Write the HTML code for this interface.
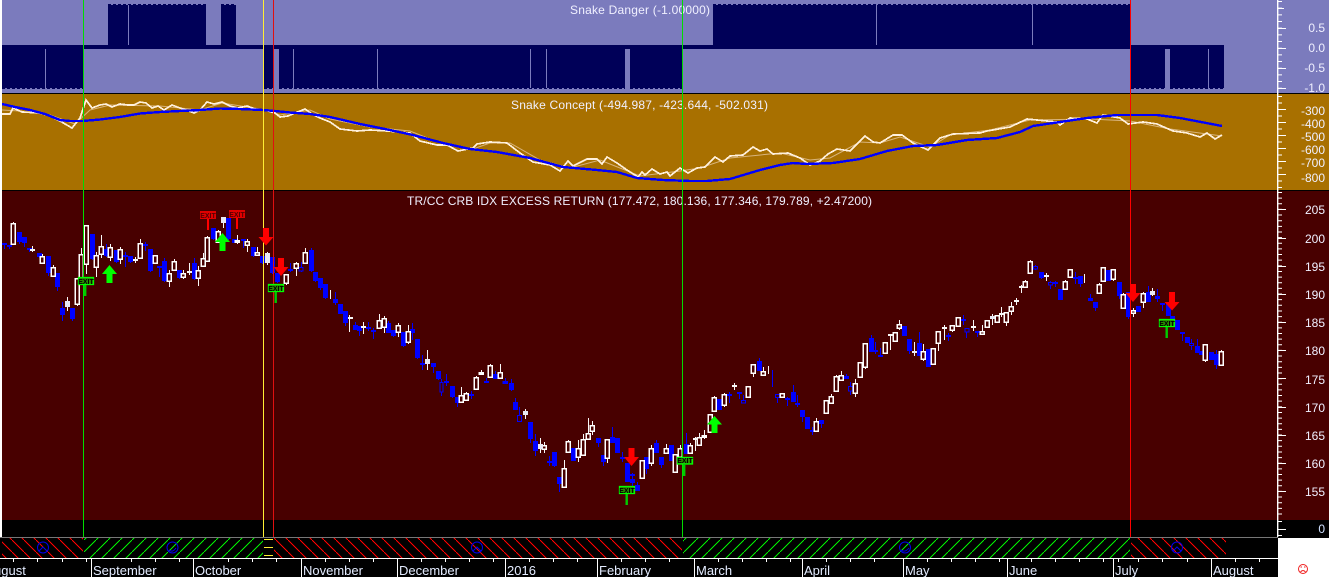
<!DOCTYPE html>
<html><head><meta charset="utf-8"><style>
html,body{margin:0;padding:0;background:#fff;width:1329px;height:577px;overflow:hidden}
svg{display:block;position:absolute;left:0;top:0}
text{font-family:"Liberation Sans",sans-serif;font-size:12px;fill:#f0f0ff}
.r{text-anchor:end}
.x{font-size:13px;fill:#e4ecff}
.e{font-size:7px;font-weight:bold;text-anchor:middle}
.bw,.ww,.bb,.bc,.wc,.wf,.wh,.bh{shape-rendering:crispEdges}
.bw{stroke:#00f;stroke-width:1;fill:none}
.ww{stroke:#f8f8f8;stroke-width:1;fill:none}
.bb{stroke:#00f;stroke-width:5;fill:none}
.bc{stroke:#00f;stroke-width:2;fill:none}
.wc{stroke:#f8f8f8;stroke-width:2;fill:none}
.wf{stroke:#e8e8f4;stroke-width:5;fill:none}
.wh{stroke:#fff;stroke-width:1.5;fill:#480000}
.bh{stroke:#00f;stroke-width:1.2;fill:#480000}
</style></head><body>
<svg width="1329" height="577" viewBox="0 0 1329 577">
<defs>
<pattern id="hr" width="12" height="12" patternUnits="userSpaceOnUse"><path shape-rendering="crispEdges" d="M-1 -1L13 13" stroke="#f00" stroke-width="1" fill="none"/></pattern>
<pattern id="hg" width="12" height="12" patternUnits="userSpaceOnUse"><path shape-rendering="crispEdges" d="M-1 13L13 -1" stroke="#0e0" stroke-width="1" fill="none"/></pattern>
</defs>
<!-- panels -->
<rect x="2" y="0" width="1327" height="93" fill="#7b7bbd"/>
<rect x="2" y="94" width="1327" height="96" fill="#a87000"/>
<rect x="2" y="191" width="1327" height="329" fill="#480000"/>
<rect x="2" y="520" width="1327" height="18" fill="#000"/>
<rect x="0" y="93" width="1329" height="1" fill="#000"/>
<rect x="0" y="190" width="1329" height="1" fill="#000"/>
<rect x="0" y="538" width="1278" height="39" fill="#000"/>
<rect x="0" y="537" width="1278" height="1" fill="#777"/>
<rect x="1278" y="538" width="51" height="39" fill="#fff"/>

<!-- snake danger -->
<g fill="#000058">
<rect x="2" y="45" width="1222" height="4"/>
<rect x="108" y="5" width="20" height="40"/><rect x="129" y="5" width="77" height="40"/><rect x="221" y="5" width="15" height="40"/>
<rect x="713" y="5" width="163" height="40"/><rect x="877" y="5" width="155" height="40"/><rect x="1033" y="5" width="97" height="40"/>
<rect x="2" y="45" width="43" height="43"/><rect x="46" y="45" width="37" height="43"/>
<rect x="264" y="45" width="9" height="43"/><rect x="279" y="45" width="14" height="43"/><rect x="294" y="45" width="83" height="43"/><rect x="378" y="45" width="152" height="43"/><rect x="531" y="45" width="15" height="43"/><rect x="547" y="45" width="78" height="43"/><rect x="630" y="45" width="52" height="43"/>
<rect x="1131" y="45" width="34" height="43"/><rect x="1170" y="45" width="38" height="43"/><rect x="1209" y="45" width="15" height="43"/>
</g>
<g stroke-width="1" stroke-dasharray="3 2" fill="none" stroke="#000058">
<path d="M108 4.5H206M221 4.5H236M713 4.5H1130M2 88.5H83M264 88.5H273M279 88.5H625M630 88.5H682M1131 88.5H1165M1170 88.5H1224"/>
</g>
<text x="570" y="14" textLength="140" lengthAdjust="spacing">Snake Danger (-1.00000)</text>

<!-- snake concept lines -->
<polyline fill="none" stroke="#d8b47c" stroke-width="1" points="2,110 20,111 50,115 75,124 90,110 110,105 160,106 200,110 222,103 260,109 280,115 310,110 330,119 370,127 410,131 440,143 473,149 490,143 510,143 540,160 570,168 600,160 640,176 680,171 700,168 730,158 780,153 810,160 830,158 860,142 880,143 900,137 930,147 950,135 990,130 1030,120 1090,119 1130,121 1170,129 1222,136"/>
<polyline fill="none" stroke="#fff0dc" stroke-width="1.7" shape-rendering="crispEdges" points="2,114 10,114 13,108 22,112 40,113 50,116 60,121 72,128 80,118 86,100 92,108 100,105 106,104 112,107 120,104 128,105 134,105 140,102 146,103 152,108 158,106 164,110 172,105 180,108 186,110 194,113 200,110 207,102 214,104 222,102 230,106 238,108 247,106 255,109 265,110 275,113 280,117 288,116 295,113 305,109 312,114 320,118 330,122 340,129 357,131 370,130 387,131 410,133 420,141 437,145 447,145 458,151 473,148 477,144 490,142 507,143 520,153 533,162 550,165 560,171 568,161 573,166 587,159 597,159 602,164 607,157 617,163 627,170 638,177 642,172 645,175 652,169 660,174 667,172 670,176 680,168 688,173 697,168 705,167 715,157 723,162 730,156 743,155 753,147 760,151 767,149 773,154 788,153 800,158 810,165 820,161 828,154 837,149 850,151 865,136 873,142 880,143 893,135 902,135 913,143 928,150 940,138 953,134 980,133 987,131 1010,127 1027,119 1037,120 1057,122 1060,125 1070,118 1087,119 1097,123 1103,115 1120,118 1128,124 1143,122 1157,124 1173,131 1187,133 1200,137 1207,133 1215,139 1222,135"/>
<polyline fill="none" stroke="#00f" stroke-width="2.4" shape-rendering="crispEdges" points="2,104 15,107 30,110 45,114 60,120 70,121 83,121 100,119.5 120,117 140,113.5 160,112 180,111 200,110 220,108.5 240,109 263,110 275,111 290,112.5 310,114 330,117 360,124 385,129 413,135 443,143 470,149 497,152 530,158 563,167 597,170 617,172 637,178 663,180 690,181 707,181 730,179 760,170 780,165 793,163 807,164 833,163 860,159 887,151 913,146 937,145 967,140 997,138 1020,132 1033,126 1060,122 1087,118 1117,115 1157,115 1180,118 1222,126"/>
<text x="511" y="109" textLength="257" lengthAdjust="spacing">Snake Concept (-494.987, -423.644, -502.031)</text>
<text x="407" y="205" textLength="465" lengthAdjust="spacing">TR/CC CRB IDX EXCESS RETURN (177.472, 180.136, 177.346, 179.789, +2.47200)</text>

<!-- blue wicks -->
<path class="bw" d="M4.5 243V249M9.5 245V249M19.5 232V244M24.5 237V247M29.5 248V252M39.5 253V258M48.5 256V276M57.5 273V291M62.5 302V321M72.5 308V321M92.5 234V260M106.5 244V257M116.5 250V263M125.5 252V267M130.5 256V263M145.5 242V251M150.5 249V272M159.5 266V277M164.5 258V282M179.5 270V279M194.5 258V280M213.5 228V240M228.5 218V240M234.5 239V243M243.5 239V248M253.5 247V257M262.5 256V264M272.5 257V274M277.5 273V283M290.5 263V272M301.5 262V272M311.5 248V272M315.5 272V282M320.5 278V290M325.5 284V299M335.5 292V305M340.5 304V314M345.5 311V326M355.5 322V330M359.5 326V336M368.5 322V331M373.5 328V339M388.5 321V333M393.5 330V337M403.5 332V347M412.5 323V340M417.5 339V359M422.5 355V370M433.5 363V373M438.5 371V380M441.5 379V396M446.5 374V386M452.5 386V398M457.5 397V407M471.5 391V399M486.5 378V383M495.5 371V379M505.5 378V384M511.5 379V391M515.5 398V410M519.5 407V422M530.5 422V443M535.5 434V456M549.5 456V466M554.5 452V467M559.5 477V492M573.5 448V461M598.5 438V447M603.5 455V466M612.5 427V443M617.5 438V453M622.5 452V462M627.5 463V482M632.5 473V487M637.5 482V491M646.5 457V474M656.5 440V453M661.5 457V468M671.5 445V461M686.5 433V454M729.5 392V403M739.5 392V399M743.5 395V403M759.5 358V371M772.5 370V387M777.5 394V403M787.5 397V406M793.5 385V402M797.5 395V407M802.5 410V422M807.5 417V429M812.5 427V435M821.5 420V428M846.5 374V379M850.5 382V395M871.5 335V352M875.5 342V354M880.5 348V357M909.5 339V354M919.5 332V356M928.5 349V367M948.5 333V341M963.5 315V325M966.5 328V338M977.5 332V337M1035.5 265V270M1041.5 272V279M1050.5 281V289M1055.5 281V287M1060.5 289V300M1075.5 272V284M1080.5 276V287M1090.5 294V301M1095.5 302V311M1108.5 270V281M1119.5 282V299M1128.5 292V319M1138.5 306V312M1148.5 286V302M1157.5 289V302M1162.5 303V311M1168.5 304V316M1172.5 316V320M1177.5 320V330M1182.5 332V341M1187.5 337V343M1191.5 339V350M1197.5 339V353M1201.5 351V355M1211.5 352V360M1216.5 350V369"/>
<!-- white wicks -->
<path class="ww" d="M13.5 222V245M32.5 246V252M42.5 254V264M53.5 265V276M67.5 297V311M77.5 278V306M81.5 248V278M86.5 225V274M96.5 252V277M101.5 235V258M110.5 244V261M120.5 247V264M135.5 257V263M140.5 239V258M155.5 255V263M169.5 270V287M174.5 259V270M183.5 270V279M189.5 263V275M198.5 266V286M203.5 253V266M207.5 236V261M218.5 230V242M223.5 217V228M237.5 235V244M247.5 239V252M257.5 247V255M267.5 252V265M286.5 274V285M296.5 262V276M305.5 248V263M330.5 290V299M349.5 315V332M363.5 322V334M379.5 314V328M384.5 316V333M398.5 323V337M408.5 325V344M427.5 350V370M461.5 387V403M466.5 392V401M476.5 376V389M481.5 370V375M490.5 364V377M500.5 364V379M525.5 409V419M540.5 438V453M544.5 442V453M564.5 460V487M568.5 440V452M578.5 440V462M583.5 434V455M588.5 418V439M592.5 421V435M607.5 439V463M642.5 460V479M651.5 445V466M666.5 444V453M675.5 454V473M680.5 445V457M690.5 443V453M695.5 437V451M699.5 433V445M704.5 430V439M710.5 414V432M714.5 396V412M724.5 393V407M734.5 383V390M748.5 386V398M753.5 364V377M763.5 367V376M768.5 366V374M782.5 393V398M816.5 418V431M826.5 400V414M831.5 394V404M836.5 375V392M841.5 371V380M855.5 379V397M860.5 362V378M865.5 343V369M890.5 334V350M895.5 332V342M899.5 320V330M914.5 342V356M923.5 344V361M933.5 348V365M938.5 331V351M944.5 325V340M952.5 325V332M958.5 317V327M973.5 320V331M982.5 325V335M987.5 320V328M992.5 314V325M997.5 315V323M1001.5 307V317M1006.5 312V326M1011.5 302V315M1016.5 298V305M1021.5 285V293M1025.5 280V288M1030.5 260V273M1046.5 273V281M1065.5 280V290M1070.5 269V278M1084.5 274V283M1099.5 283V294M1103.5 267V282M1113.5 269V281M1123.5 293V309M1133.5 308V317M1143.5 292V308M1152.5 288V296M1205.5 344V362M1221.5 350V366"/>
<!-- hollow blue -->
<path class="bh" d="M440 382.5h3V392h-3zM503 381.5h4v2h-4zM517.5 415.5h4V421.5h-4zM775.5 394.5h4V397.5h-4zM741.5 400.5h4V403h-4zM848.5 386.5h4V391h-4zM965 328.5h4V332h-4zM1033.5 266.5h4V269h-4zM1048.5 282.5h4V285h-4zM1189.5 343.5h4V345.5h-4zM299 267.5h4V271h-4z"/>
<!-- blue bodies -->
<path class="bb" d="M19.5 232V242M24.5 237V243M39.5 253V257M48.5 256V273M57.5 273V287M62.5 308V315M72.5 308V319M92.5 234V259M106.5 249V256M116.5 250V262M130.5 256V262M150.5 249V271M164.5 261V281M179.5 270V278M194.5 263V279M213.5 228V239M228.5 218V239M234.5 239V243M253.5 247V256M262.5 256V263M272.5 257V273M277.5 273V282M311.5 250V271M315.5 272V281M320.5 278V288M325.5 284V298M335.5 299V303M340.5 304V314M345.5 311V323M355.5 325V330M359.5 326V331M388.5 323V333M393.5 330V336M403.5 332V346M412.5 329V333M417.5 339V358M433.5 363V367M438.5 371V379M452.5 386V397M457.5 397V403M486.5 381V383M495.5 374V379M505.5 381V384M511.5 383V390M515.5 402V410M530.5 422V439M535.5 441V451M554.5 452V466M559.5 477V484M573.5 448V461M598.5 438V443M603.5 455V462M612.5 437V443M617.5 438V453M627.5 463V482M632.5 479V483M637.5 485V491M646.5 457V469M656.5 443V453M661.5 457V465M671.5 445V461M686.5 444V454M719.5 399V410M759.5 361V371M793.5 392V402M802.5 410V417M807.5 417V429M821.5 420V424M846.5 376V379M871.5 338V352M904.5 326V336M909.5 339V351M919.5 343V356M928.5 349V367M1041.5 272V278M1060.5 289V300M1080.5 276V284M1090.5 298V301M1095.5 302V308M1108.5 270V281M1119.5 282V296M1128.5 292V317M1138.5 306V312M1148.5 292V302M1157.5 296V299M1168.5 304V316M1172.5 316V320M1177.5 320V330M1187.5 337V343M1197.5 346V353M1201.5 351V355M1211.5 352V360M1216.5 354V365"/>
<!-- blue crosses -->
<path class="bc" d="M2 244h5M7 246h5M27 249h5M123 256h5M143 245h5M157 267h5M241 240h5M288 270h5M366 328h5M371 331h5M420 364h5M444 382h5M469 395h5M547 462h5M620 458h5M630 475h5M727 395h5M737 393h5M785 399h5M795 404h5M810 431h5M873 351h5M878 356h5M946 336h5M961 320h5M975 332h5M1053 283h5M1073 278h5M1180 333h5M1160 304h5"/>
<!-- hollow white -->
<path class="wh" d="M11 223.5h4V244h-4zM40 256.5h4V263h-4zM51 267.5h4V276h-4zM75 278.5h4V304h-4zM79 254.5h4V278h-4zM84 225.5h4V264h-4zM94 255.5h4V267h-4zM99 246.5h4V254h-4zM108 247.5h4V257h-4zM118 249.5h4V259h-4zM138 243.5h4V258h-4zM153 255.5h4V263h-4zM167 273.5h4V281h-4zM172 261.5h4V270h-4zM181 273.5h4V277h-4zM196 270.5h4V278h-4zM201 258.5h4V266h-4zM205 237.5h4V261h-4zM216 231.5h4V242h-4zM235 240.5h4V242h-4zM245 241.5h4V245h-4zM255 252.5h4V255h-4zM284 274.5h4V283h-4zM294 263.5h4V268h-4zM303 252.5h4V263h-4zM377 320.5h4V328h-4zM382 318.5h4V327h-4zM396 325.5h4V332h-4zM406 331.5h4V342h-4zM459 395.5h4V402h-4zM464 393.5h4V400h-4zM474 377.5h4V389h-4zM479 372.5h4V374h-4zM488 365.5h4V377h-4zM498 372.5h4V378h-4zM542 445.5h4V449h-4zM562 468.5h4V487h-4zM566 441.5h4V452h-4zM576 448.5h4V457h-4zM581 439.5h4V455h-4zM586 433.5h4V439h-4zM590 425.5h4V431h-4zM605 439.5h4V458h-4zM640 460.5h4V478h-4zM649 448.5h4V463h-4zM664 448.5h4V453h-4zM673 454.5h4V472h-4zM678 448.5h4V457h-4zM688 445.5h4V453h-4zM697 437.5h4V445h-4zM702 435.5h4V437h-4zM708 414.5h4V432h-4zM712 397.5h4V411h-4zM722 394.5h4V405h-4zM746 386.5h4V397h-4zM751 364.5h4V373h-4zM761 371.5h4V375h-4zM780 393.5h4V397h-4zM814 421.5h4V431h-4zM824 400.5h4V413h-4zM829 396.5h4V403h-4zM834 376.5h4V391h-4zM839 375.5h4V380h-4zM853 383.5h4V393h-4zM858 362.5h4V377h-4zM863 343.5h4V367h-4zM883 342.5h4V353h-4zM893 332.5h4V341h-4zM897 324.5h4V328h-4zM921 351.5h4V359h-4zM931 348.5h4V364h-4zM936 331.5h4V343h-4zM950 325.5h4V330h-4zM956 317.5h4V326h-4zM980 331.5h4V334h-4zM985 320.5h4V327h-4zM995 315.5h4V322h-4zM1004 312.5h4V322h-4zM1009 306.5h4V311h-4zM1023 281.5h4V287h-4zM1028 261.5h4V273h-4zM1063 281.5h4V289h-4zM1068 269.5h4V277h-4zM1097 284.5h4V293h-4zM1101 267.5h4V281h-4zM1111 269.5h4V279h-4zM1121 294.5h4V308h-4zM1131 310.5h4V313h-4zM1141 293.5h4V302h-4zM1203 344.5h4V360h-4zM1219 351.5h4V365h-4z"/>
<!-- filled white -->
<path class="wf" d="M67.5 301V307M223.5 217V223M267.5 253V263M427.5 359V364M525.5 411V415M540.5 444V449M914.5 351V353M992.5 316V319M1152.5 291V295"/>
<path class="wc" d="M30 250h5M133 260h5M187 272h5M348 318h5M361 327h5M693 439h5M732 386h5M888 335h5M942 328h5M971 327h5M999 314h5M1014 301h5M1044 276h5M1019 287h5"/>

<!-- vertical signal lines -->
<g stroke-width="1" fill="none">
<path d="M83.5 0V537M682.5 0V537" stroke="#0d0"/>
<path d="M263.5 0V537" stroke="#ffee33"/>
<path d="M273.5 0V537" stroke="#e01010"/>
<path d="M1130.5 0V537" stroke="#f00"/>
</g>

<!-- arrows -->
<g fill="#0f0">
<path d="M109.5 265L117 274H112.5V283H106.5V274H102z"/>
<path d="M222.5 233L230 242H225.5V251H219.5V242H215z"/>
<path d="M714.5 416L722 424.5H717.5V433H711.5V424.5H707z"/>
</g>
<g fill="#f00">
<path d="M263 228H269V237H273.5L266 245.5L258.5 237H263z"/>
<path d="M278 258H284V267H288.5L281 276L273.5 267H278z"/>
<path d="M628.5 448H634.5V457H639L631.5 466L624 457H628.5z"/>
<path d="M1130 284H1136V293H1140.5L1133 302L1125.5 293H1130z"/>
<path d="M1169 292H1175V302H1179.5L1172 310.5L1164.5 302H1169z"/>
</g>
<!-- exit flags -->
<g>
<rect x="200" y="211" width="16" height="8" fill="#e00000"/><rect x="207" y="219" width="2" height="11" fill="#f00"/><text class="e" x="208" y="218" style="fill:#500">EXIT</text>
<rect x="229" y="210" width="16" height="8" fill="#e00000"/><rect x="236" y="218" width="2" height="11" fill="#f00"/><text class="e" x="237" y="217" style="fill:#500">EXIT</text>
<rect x="78.5" y="277.5" width="15" height="7" fill="#2a8a00" stroke="#0f0" stroke-width="1.3"/><rect x="84" y="285" width="2.4" height="11" fill="#0c0"/><text class="e" x="86" y="284" style="fill:#000">EXIT</text>
<rect x="268.5" y="284.5" width="15" height="7" fill="#2a8a00" stroke="#0f0" stroke-width="1.3"/><rect x="274.5" y="292" width="2.4" height="11" fill="#0c0"/><text class="e" x="276" y="291" style="fill:#000">EXIT</text>
<rect x="619.5" y="486.5" width="15" height="7" fill="#2a8a00" stroke="#0f0" stroke-width="1.3"/><rect x="625.5" y="494" width="2.4" height="11" fill="#0c0"/><text class="e" x="627" y="493" style="fill:#000">EXIT</text>
<rect x="677.5" y="457.5" width="15" height="6.5" fill="#2a8a00" stroke="#0f0" stroke-width="1.3"/><rect x="683" y="464" width="2.4" height="12" fill="#0c0"/><text class="e" x="685" y="463" style="fill:#000">EXIT</text>
<rect x="1159.5" y="319.5" width="15" height="7" fill="#2a8a00" stroke="#0f0" stroke-width="1.3"/><rect x="1165.5" y="327" width="2.4" height="11" fill="#0c0"/><text class="e" x="1167" y="326" style="fill:#000">EXIT</text>
</g>

<!-- right axis -->
<rect x="1277" y="0" width="1.4" height="537" fill="#fff"/>
<g fill="none" stroke="#fff">
<line x1="1280" y1="1" x2="1280" y2="92" stroke-width="4" stroke-dasharray="1 5.67"/>
<path d="M1278 8.5h6M1278 28.5h8M1278 48.5h8M1278 68.5h8M1278 88.5h8" stroke-width="1"/>
<line x1="1280" y1="96" x2="1280" y2="189" stroke-width="4" stroke-dasharray="1 5.5"/>
<path d="M1278 109.5h8M1278 122.5h8M1278 135.5h8M1278 148.5h8M1278 161.5h8M1278 174.5h8" stroke-width="1"/>
<line x1="1280" y1="192" x2="1280" y2="519" stroke-width="4" stroke-dasharray="1 4.64"/>
<path d="M1278 209.5h8M1278 238.5h8M1278 266.5h8M1278 294.5h8M1278 322.5h8M1278 350.5h8M1278 378.5h8M1278 407.5h8M1278 435.5h8M1278 463.5h8M1278 491.5h8" stroke-width="1"/>
<path d="M1278 521.5h4M1278 529.5h8M1278 535.5h4" stroke-width="1"/>
</g>
<g class="lab">
<text class="r" x="1325" y="32">0.5</text><text class="r" x="1325" y="52">0.0</text><text class="r" x="1325" y="72">-0.5</text><text class="r" x="1325" y="92">-1.0</text>
<text class="r" x="1325" y="115">-300</text><text class="r" x="1325" y="128">-400</text><text class="r" x="1325" y="141">-500</text><text class="r" x="1325" y="154">-600</text><text class="r" x="1325" y="167">-700</text><text class="r" x="1325" y="182">-800</text>
<text class="r" x="1325" y="214">205</text><text class="r" x="1325" y="243">200</text><text class="r" x="1325" y="271">195</text><text class="r" x="1325" y="299">190</text><text class="r" x="1325" y="327">185</text><text class="r" x="1325" y="355">180</text><text class="r" x="1325" y="384">175</text><text class="r" x="1325" y="412">170</text><text class="r" x="1325" y="440">165</text><text class="r" x="1325" y="468">160</text><text class="r" x="1325" y="496">155</text>
<text class="r" x="1325" y="533" style="fill:#cfe0ff">0</text>
</g>

<!-- hatch band -->
<rect x="2" y="538" width="81" height="20" fill="url(#hr)"/>
<rect x="84" y="538" width="179" height="20" fill="url(#hg)"/>
<rect x="274" y="538" width="408" height="20" fill="url(#hr)"/>
<rect x="683" y="538" width="447" height="20" fill="url(#hg)"/>
<rect x="1131" y="538" width="95" height="20" fill="url(#hr)"/>
<path d="M264 539.5h9M264 547.5h9M264 555.5h9" stroke="#ffee33" fill="none"/>
<g fill="none" stroke="#0000ee" stroke-width="1">
<circle cx="43" cy="547.5" r="5.5"/><path d="M39 551L43 547L47 551"/>
<circle cx="172.5" cy="547.5" r="5.5"/><path d="M169 550Q172.5 553 176 548"/>
<circle cx="477" cy="547.5" r="5.5"/><path d="M473 551L477 547L481 551"/>
<circle cx="905" cy="547.5" r="5.5"/><path d="M901 550Q905 553 909 548"/>
<circle cx="1177" cy="547.5" r="5.5"/><path d="M1173 551L1177 547L1181 551"/>
</g>

<!-- x axis -->
<rect x="0" y="558" width="1278" height="1" fill="#fff"/>
<path fill="none" stroke="#fff" d="M91.5 558V577M193.5 558V577M301.5 558V577M397.5 558V577M505.5 558V577M597.5 558V577M694.5 558V577M802.5 558V577M903.5 558V577M1007.5 558V577M1113.5 558V577M1211.5 558V577"/>
<path fill="none" stroke="#fff" d="M13.5 558v4M37.5 558v4M62.5 558v4M86.5 558v4M131.5 558v4M155.5 558v4M179.5 558v4M228.5 558v4M252.5 558v4M276.5 558v4M325.5 558v4M349.5 558v4M373.5 558v4M421.5 558v4M445.5 558v4M469.5 558v4M493.5 558v4M529.5 558v4M553.5 558v4M577.5 558v4M621.5 558v4M645.5 558v4M669.5 558v4M718.5 558v4M742.5 558v4M766.5 558v4M790.5 558v4M826.5 558v4M850.5 558v4M874.5 558v4M927.5 558v4M951.5 558v4M975.5 558v4M999.5 558v4M1031.5 558v4M1055.5 558v4M1079.5 558v4M1103.5 558v4M1118.5 558v4M1138.5 558v4M1162.5 558v4M1187.5 558v4M1235.5 558v4M1259.5 558v4"/>
<g>
<text class="x" x="-6" y="575">ugust</text>
<text class="x" x="93" y="575">September</text>
<text class="x" x="195" y="575">October</text>
<text class="x" x="303" y="575">November</text>
<text class="x" x="399" y="575">December</text>
<text class="x" x="507" y="575">2016</text>
<text class="x" x="599" y="575">February</text>
<text class="x" x="696" y="575">March</text>
<text class="x" x="804" y="575">April</text>
<text class="x" x="905" y="575">May</text>
<text class="x" x="1009" y="575">June</text>
<text class="x" x="1115" y="575">July</text>
<text class="x" x="1213" y="575">August</text>
</g>
<rect x="0" y="0" width="2" height="537" fill="#fff"/>
<!-- sad face -->
<g fill="none" stroke="#f02020" stroke-width="1">
<circle cx="1303" cy="569" r="4.5"/><path d="M1300.5 572Q1303 569 1305.5 572M1300.5 567h1.5M1304 567h1.5"/>
</g>
</svg>
</body></html>
